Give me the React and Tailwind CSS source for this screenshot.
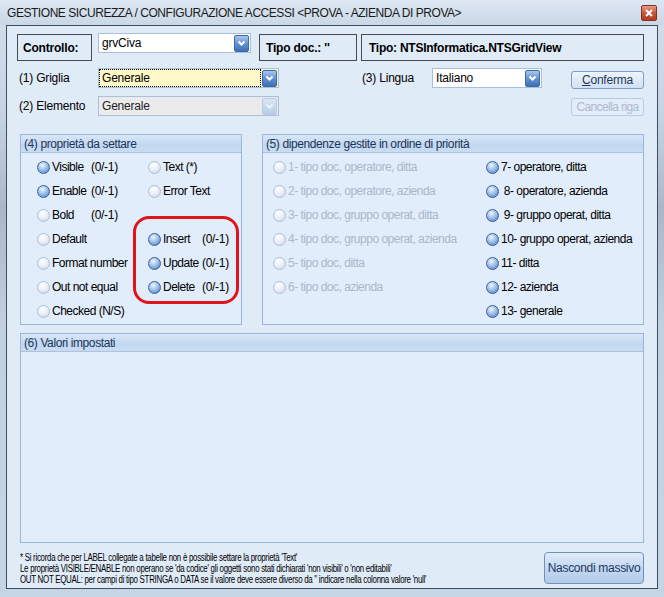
import React from 'react';

// Windows-7 style security configuration dialog

const Dot = ({ on }) => (
  <span
    className={`inline-block w-[13px] h-[13px] rounded-full border shrink-0 ${
      on
        ? 'border-[#34609c] bg-[radial-gradient(circle_at_40%_30%,#f2f7fd_0%,#a9c6ec_40%,#4a7bc0_100%)]'
        : 'border-[#aebfd4] bg-[radial-gradient(circle_at_40%_30%,#ffffff_0%,#e8eef6_50%,#c6d3e3_100%)]'
    }`}
  />
);

const Arrow = ({ disabled }) => (
  <span
    className={`flex items-center justify-center w-[15px] h-[17px] rounded-[2px] border ${
      disabled
        ? 'border-[#b9cbe2] bg-[linear-gradient(to_bottom,#d9e5f3,#b8cde6)]'
        : 'border-[#3c6aa7] bg-[linear-gradient(to_bottom,#a9c6ec,#5f8fd0_55%,#3f70b6)]'
    }`}
  >
    <svg width="9" height="7" viewBox="0 0 9 7">
      <polyline
        points="1.5,1.5 4.5,4.5 7.5,1.5"
        fill="none"
        stroke={disabled ? '#eef3f9' : '#ffffff'}
        strokeWidth="2"
      />
    </svg>
  </span>
);

const Combo = ({ value, width, variant }) => {
  const bg =
    variant === 'focus' ? 'bg-[#fff8c8]' : variant === 'disabled' ? 'bg-[#ebebeb]' : 'bg-white';
  return (
    <div
      className={`flex items-center h-[20px] border border-[#a9bfdc] ${bg} pl-[1px] pr-[1px]`}
      style={{ width }}
    >
      <div
        className={`flex-1 h-[16px] flex items-center pl-[2px] text-[12px] tracking-[-0.2px] ${
          variant === 'focus' ? 'outline outline-1 outline-dotted outline-black' : ''
        } ${variant === 'disabled' ? 'text-[#222]' : 'text-black'}`}
      >
        {value}
      </div>
      <div className="ml-[2px]">
        <Arrow disabled={variant === 'disabled'} />
      </div>
    </div>
  );
};

const GroupHeader = ({ children }) => (
  <div className="h-[18px] flex items-center px-[3px] text-[12px] tracking-[-0.4px] text-[#1b3558] border-b border-[#aac3e2] bg-[linear-gradient(to_bottom,#d9e7f7,#c2d7f0_60%,#cadcf1)]">
    {children}
  </div>
);

const Prop = ({ on, label, value, disabled, w }) => (
  <div className="h-[24px] flex items-center">
    <Dot on={on} />
    <span
      className={`ml-[2px] text-[12px] tracking-[-0.5px] whitespace-nowrap ${
        disabled ? 'text-[#a8b8cb]' : 'text-black'
      }`}
      style={w ? { width: w } : undefined}
    >
      {label}
    </span>
    {value && <span className="text-[12px] tracking-[-0.3px]">{value}</span>}
  </div>
);

export default function App() {
  return (
    <div className="w-[664px] h-[597px] flex flex-col font-['Liberation_Sans',Arial,sans-serif] bg-[linear-gradient(to_bottom,#d3dfec_0%,#c4d3e4_20%,#a9b7c7_35%,#c2d1e2_55%,#c6d5e6_100%)]">
      {/* Title bar */}
      <div className="h-[25px] flex items-center justify-between pl-[7px] pr-[7px] bg-[linear-gradient(to_bottom,#dde7f1,#c9d7e7)]">
        <span className="text-[12px] tracking-[-0.45px] text-[#1a1a1a] whitespace-nowrap">
          GESTIONE SICUREZZA / CONFIGURAZIONE ACCESSI &lt;PROVA - AZIENDA DI PROVA&gt;
        </span>
        <span className="w-[16px] h-[16px] mt-[1px] flex items-center justify-center rounded-[2px] border border-[#83301f] bg-[linear-gradient(to_bottom,#e69b86,#c9563a_50%,#b03b20)]">
          <svg width="8" height="8" viewBox="0 0 8 8">
            <path d="M1 1 L7 7 M7 1 L1 7" stroke="#fff" strokeWidth="2" />
          </svg>
        </span>
      </div>

      {/* Client area */}
      <div className="flex-1 mx-[6px] mb-[8px] border border-[#3f4c5c] bg-[#e0ebf8] flex flex-col pt-[7px] pl-[13px] pr-[13px] text-black">
        {/* Row 1 */}
        <div className="h-[28px] flex items-start -ml-[3px]">
          <div className="mt-[1px] w-[75px] h-[27px] border border-[#4a4a4a] flex items-center pl-[5px] text-[12px] font-bold tracking-[-0.2px]">
            Controllo:
          </div>
          <div className="ml-[6px]">
            <Combo value="grvCiva" width={153} />
          </div>
          <div className="ml-[8px] mt-[1px] w-[98px] h-[27px] border border-[#4a4a4a] flex items-center pl-[6px] text-[12px] font-bold tracking-[-0.2px]">
            Tipo doc.: ''
          </div>
          <div className="ml-[4px] mt-[1px] flex-1 h-[27px] border border-[#4a4a4a] flex items-center pl-[7px] text-[12px] font-bold tracking-[-0.25px]">
            Tipo: NTSInformatica.NTSGridView
          </div>
        </div>

        {/* Row 2 */}
        <div className="mt-[7px] h-[20px] flex items-center -ml-[1px]">
          <span className="w-[79px] text-[12px] tracking-[-0.2px]">(1) Griglia</span>
          <Combo value="Generale" width={181} variant="focus" />
          <span className="ml-[83px] w-[70px] text-[12px] tracking-[-0.2px]">(3) Lingua</span>
          <Combo value="Italiano" width={110} />
          <button className="ml-[29px] mt-[3px] w-[73px] h-[18px] rounded-[3px] border border-[#7f9ec6] bg-[linear-gradient(to_bottom,#eef4fb,#d2e1f3)] text-[12px] tracking-[-0.2px] text-[#1e395b] leading-none">
            <span className="underline">C</span>onferma
          </button>
        </div>

        {/* Row 3 */}
        <div className="mt-[8px] h-[20px] flex items-center -ml-[1px]">
          <span className="w-[79px] text-[12px] tracking-[-0.2px]">(2) Elemento</span>
          <Combo value="Generale" width={181} variant="disabled" />
          <button className="ml-auto mt-[2px] w-[73px] h-[18px] rounded-[3px] border border-[#b7cbe3] bg-[#e3edf9] text-[12px] tracking-[-0.6px] text-[#a9bace] leading-none whitespace-nowrap">
            Cancella riga
          </button>
        </div>

        {/* Groups 4 and 5 */}
        <div className="mt-[18px] flex gap-[20px]">
          <div className="relative w-[222px] h-[191px] border border-[#99b6dc] bg-[#e1edfa]">
            <GroupHeader>(4) proprietà da settare</GroupHeader>
            <div className="pt-[2px] pl-[16px] flex">
              <div className="w-[111px]">
                <Prop on label="Visible" value="(0/-1)" w={39} />
                <Prop on label="Enable" value="(0/-1)" w={39} />
                <Prop label="Bold" value="(0/-1)" w={39} />
                <Prop label="Default" />
                <Prop label="Format number" />
                <Prop label="Out not equal" />
                <Prop label="Checked (N/S)" />
              </div>
              <div>
                <Prop label="Text (*)" />
                <Prop label="Error Text" />
                <div className="h-[24px]" />
                <Prop on label="Insert" value="(0/-1)" w={39} />
                <Prop on label="Update" value="(0/-1)" w={39} />
                <Prop on label="Delete" value="(0/-1)" w={39} />
              </div>
            </div>
            {/* red highlight */}
            <div className="absolute left-[112px] top-[81px] w-[106px] h-[88px] rounded-[16px] border-[3px] border-[#e0141c]" />
          </div>

          <div className="flex-1 h-[191px] border border-[#99b6dc] bg-[#e1edfa]">
            <GroupHeader>(5) dipendenze gestite in ordine di priorità</GroupHeader>
            <div className="pt-[2px] pl-[10px] flex">
              <div className="w-[213px]">
                <Prop disabled label="1- tipo doc, operatore, ditta" />
                <Prop disabled label="2- tipo doc, operatore, azienda" />
                <Prop disabled label="3- tipo doc, gruppo operat, ditta" />
                <Prop disabled label="4- tipo doc, gruppo operat, azienda" />
                <Prop disabled label="5- tipo doc, ditta" />
                <Prop disabled label="6- tipo doc, azienda" />
              </div>
              <div>
                <Prop on label="7- operatore, ditta" />
                <Prop on label={'\u00a08- operatore, azienda'} />
                <Prop on label={'\u00a09- gruppo operat, ditta'} />
                <Prop on label="10- gruppo operat, azienda" />
                <Prop on label="11- ditta" />
                <Prop on label="12- azienda" />
                <Prop on label="13- generale" />
              </div>
            </div>
          </div>
        </div>

        {/* Group 6 */}
        <div className="mt-[8px] h-[210px] border border-[#99b6dc] bg-[#e1edfa]">
          <GroupHeader>(6) Valori impostati</GroupHeader>
        </div>

        {/* Footer */}
        <div className="mt-[8px] flex items-start">
          <div className="flex-1 min-w-0 pt-[1px] text-[11px] leading-[11px] tracking-[-0.4px] text-black whitespace-nowrap scale-x-[0.72] origin-left">
            <div>* Si ricorda che per LABEL collegate a tabelle non è possibile settare la proprietà 'Text'</div>
            <div>Le proprietà VISIBLE/ENABLE non operano se 'da codice' gli oggetti sono stati dichiarati 'non visibili' o 'non editabili'</div>
            <div>OUT NOT EQUAL: per campi di tipo STRINGA o DATA se il valore deve essere diverso da '' indicare nella colonna valore 'null'</div>
          </div>
          <button className="mt-[1px] w-[100px] h-[32px] shrink-0 rounded-[4px] border border-[#6f90bd] bg-[linear-gradient(to_bottom,#e1ecf9,#c3d8f1_50%,#b2cbea)] text-[12px] text-[#1e395b] tracking-[-0.3px]">
            Nascondi massivo
          </button>
        </div>
      </div>
    </div>
  );
}
